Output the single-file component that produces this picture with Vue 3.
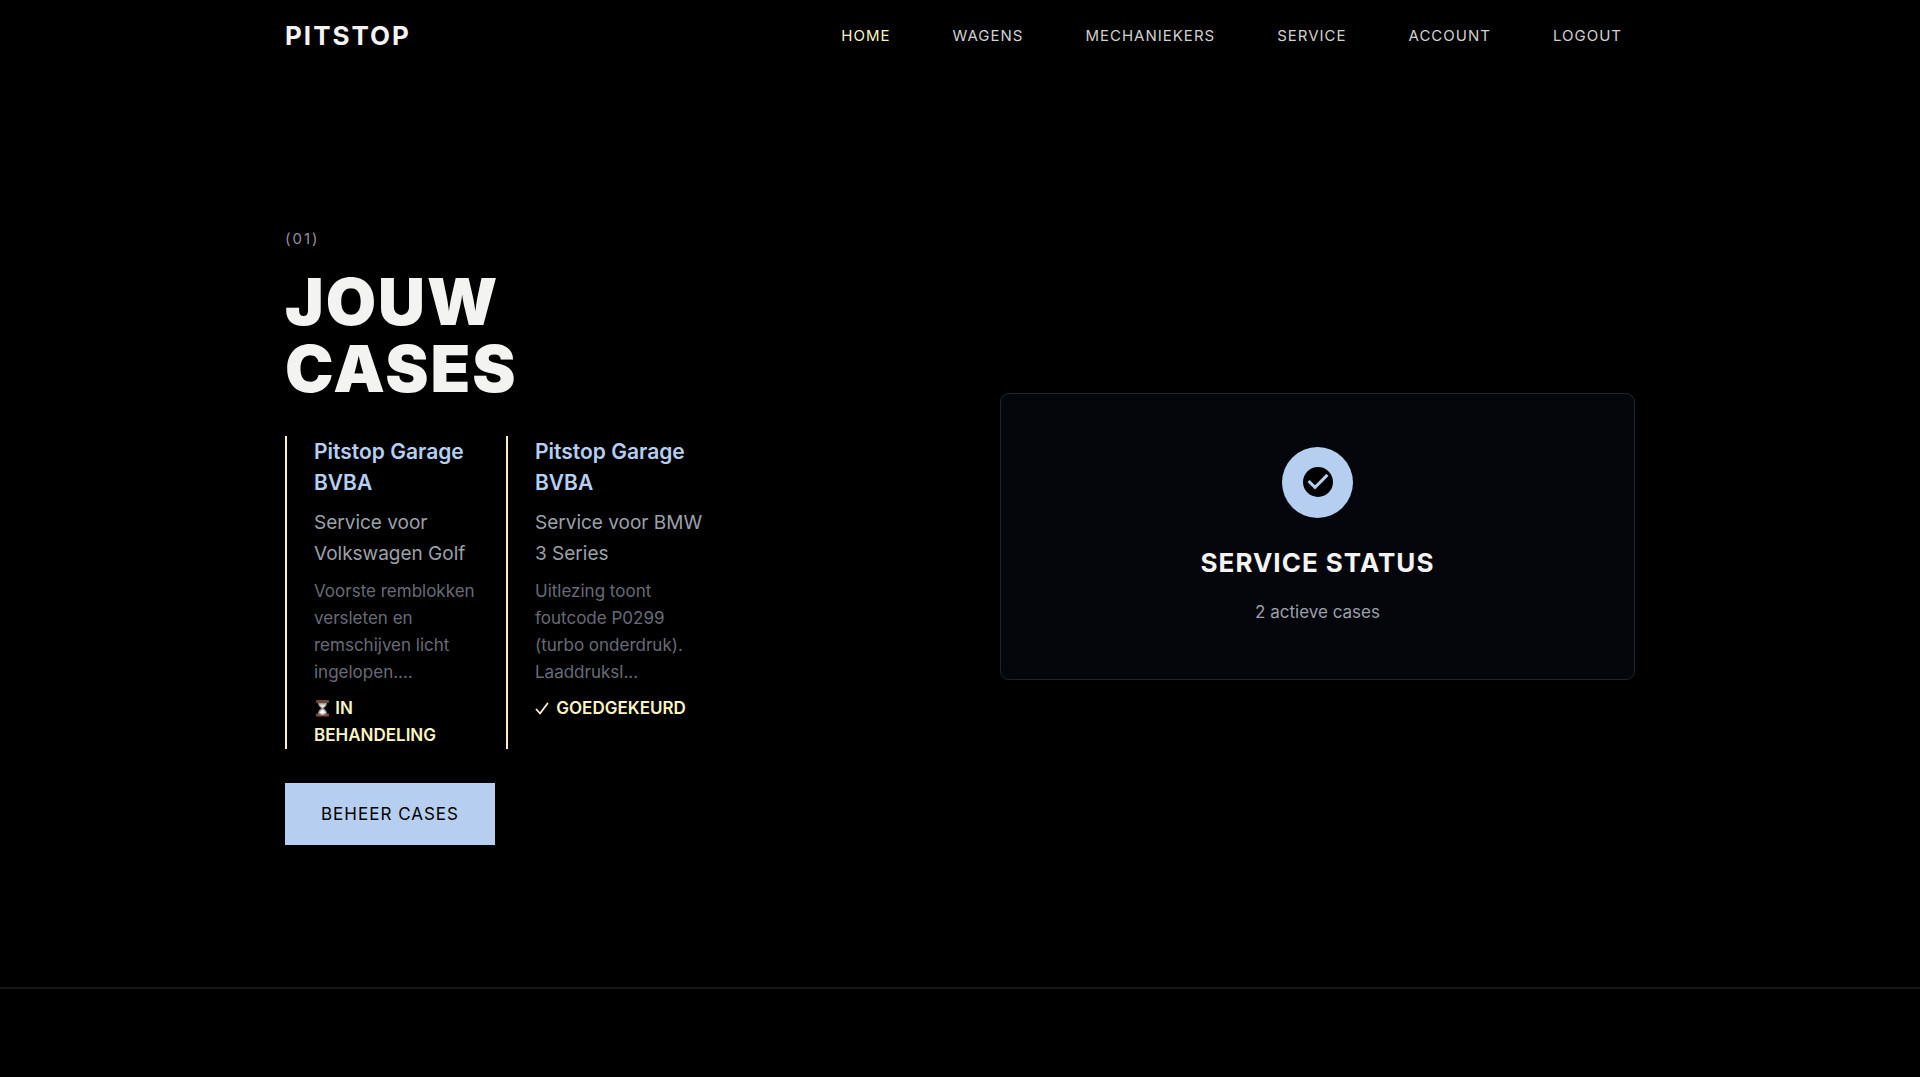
<template>
  <div class="page">
    <header class="header">
      <div class="container header-inner">
        <a href="#" class="logo">PITSTOP</a>
        <nav class="nav">
          <a
            v-for="link in links"
            :key="link"
            href="#"
            :class="['nav-link', { active: link === activeLink }]"
          >{{ link }}</a>
        </nav>
      </div>
    </header>

    <main>
      <section class="cases">
        <div class="container cases-grid">
          <div class="cases-content">
            <div class="section-number">(01)</div>
            <h1 class="heading">JOUW<br />CASES</h1>

            <div class="case-list">
              <article v-for="item in cases" :key="item.car" class="case-item">
                <h2 class="case-title">{{ item.garage }}</h2>
                <p class="case-car">Service voor {{ item.car }}</p>
                <p class="case-text">{{ item.text }}</p>
                <p class="case-status">
                  <svg v-if="item.pending" class="status-icon" viewBox="0 0 17 18" aria-hidden="true">
                    <path d="M4 3.5h9c0 3-1.500 4.300-3.500 5.700C11.500 10.600 13 12 13 15H4c0-3 1.500-4.400 3.500-5.800C5.500 7.800 4 6.500 4 3.500z" fill="#9b9c9e" />
                    <path d="M5.500 5.500h6c-.5 1.400-1.500 2.300-3 3.300-1.500-1-2.500-1.900-3-3.300z" fill="#efe4d8" />
                    <path d="M8.500 10.500c1.800 1.300 3 2.500 3.300 4.500H5.200c.3-2 1.500-3.200 3.300-4.500z" fill="#fff" />
                    <rect x="2" y="1" width="13" height="3" rx="1" fill="#6d4a3c" />
                    <rect x="2" y="14.500" width="13" height="3" rx="1" fill="#7b5340" />
                    <path d="M6 15.500l2.500-1.500 2.500 1.500z" fill="#fff" />
                  </svg>
                  <svg v-else class="status-icon" viewBox="0 0 17 18" aria-hidden="true">
                    <path d="M1.500 10.500l3.500 4L12.500 4.500" fill="none" stroke="currentColor" stroke-width="1.800" stroke-linecap="round" stroke-linejoin="round" />
                  </svg>
                  {{ item.status }}
                </p>
              </article>
            </div>

            <button type="button" class="manage-btn">BEHEER CASES</button>
          </div>

          <div class="status-card">
            <div class="status-circle">
              <svg viewBox="0 0 24 24" width="36" height="36" aria-hidden="true">
                <circle cx="12" cy="12" r="10" fill="#000" />
                <path d="M10 17l-5-5 1.410-1.410L10 14.170l7.590-7.590L19 8z" fill="#b6ceef" />
              </svg>
            </div>
            <h2 class="status-title">SERVICE STATUS</h2>
            <p class="status-count">{{ cases.length }} actieve cases</p>
          </div>
        </div>
      </section>
    </main>
  </div>
</template>

<script setup>
import { ref } from 'vue'

const links = ['HOME', 'WAGENS', 'MECHANIEKERS', 'SERVICE', 'ACCOUNT', 'LOGOUT']
const activeLink = ref('HOME')

const cases = ref([
  {
    garage: 'Pitstop Garage BVBA',
    car: 'Volkswagen Golf',
    text: 'Voorste remblokken versleten en remschijven licht ingelopen....',
    status: 'IN BEHANDELING',
    pending: true
  },
  {
    garage: 'Pitstop Garage BVBA',
    car: 'BMW 3 Series',
    text: 'Uitlezing toont foutcode P0299 (turbo onderdruk). Laaddruksl...',
    status: 'GOEDGEKEURD',
    pending: false
  }
])
</script>

<style>
body {
  margin: 0;
  background: #000;
}
</style>

<style scoped>
.page {
  min-height: 100vh;
  background: #000;
  color: #f3f4f1;
  font-family: Inter, 'Liberation Sans', sans-serif;
}

h1,
h2,
p {
  margin: 0;
}

.container {
  max-width: 1350px;
  margin: 0 auto;
}

.header-inner {
  display: flex;
  align-items: center;
  justify-content: space-between;
  height: 71px;
}

.logo {
  color: #f3f4f1;
  font-size: 26px;
  font-weight: 700;
  letter-spacing: 2px;
  text-decoration: none;
}

.nav {
  display: flex;
  gap: 36px;
}

.nav-link {
  padding: 8px 13px;
  color: #d1d1d1;
  font-size: 15px;
  letter-spacing: 1px;
  text-decoration: none;
}

.nav-link.active {
  color: #fdf5c4;
}

.cases {
  padding: 156px 0 142px;
  border-bottom: 2px solid #12171a;
}

.cases-grid {
  display: grid;
  grid-template-columns: 1fr 1fr;
  align-items: center;
  gap: 80px;
}

.section-number {
  margin-bottom: 17px;
  color: #8f929c;
  font-size: 15px;
  line-height: 24px;
  letter-spacing: 2px;
}

.heading {
  margin-bottom: 34px;
  font-size: 65px;
  font-weight: 900;
  line-height: 67px;
  letter-spacing: 2px;
}

.case-list {
  display: grid;
  grid-template-columns: 1fr 1fr;
  gap: 22px;
  max-width: 420px;
  margin-bottom: 34px;
}

.case-item {
  display: flex;
  flex-direction: column;
  gap: 9px;
  padding-left: 27px;
  border-left: 2px solid #fdf0c4;
}

.case-title {
  color: #b6ceef;
  font-size: 21px;
  font-weight: 600;
  line-height: 31px;
}

.case-car {
  color: #9ca0a9;
  font-size: 19px;
  line-height: 31px;
}

.case-text {
  color: #686b77;
  font-size: 17px;
  line-height: 27px;
}

.case-status {
  max-width: 160px;
  color: #fdf5c4;
  font-size: 17px;
  font-weight: 600;
  line-height: 27px;
}

.status-icon {
  width: 17px;
  height: 18px;
  vertical-align: -3px;
}

.manage-btn {
  padding: 18px 36px;
  border: none;
  background: #b6ceef;
  color: #000;
  font-family: inherit;
  font-size: 17px;
  line-height: 26px;
  letter-spacing: 1px;
  cursor: pointer;
}

.status-card {
  padding: 53px;
  border: 1px solid #1b2530;
  border-radius: 9px;
  background: #04060c;
  text-align: center;
}

.status-circle {
  display: flex;
  align-items: center;
  justify-content: center;
  width: 71px;
  height: 71px;
  margin: 0 auto 27px;
  border-radius: 50%;
  background: #b6ceef;
}

.status-title {
  margin-bottom: 18px;
  font-size: 26px;
  font-weight: 700;
  line-height: 36px;
  letter-spacing: 1px;
}

.status-count {
  color: #9ca0a9;
  font-size: 17px;
  line-height: 27px;
}
</style>
